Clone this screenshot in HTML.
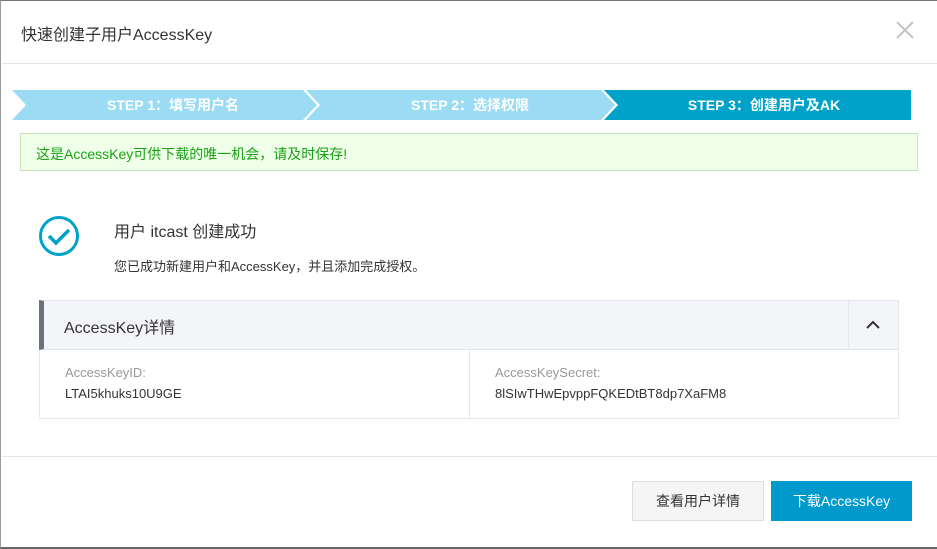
<!DOCTYPE html>
<html><head><meta charset="utf-8"><style>
*{margin:0;padding:0;box-sizing:border-box}
body{width:937px;height:549px;background:#fff;position:relative;overflow:hidden;font-family:"Liberation Sans","Noto Sans CJK SC",sans-serif;color:#333}
.a{position:absolute}
</style></head><body>
<div class="a" style="left:0;top:0;width:937px;height:549px;border-top:1px solid #777;border-left:1px solid #999;border-bottom:2px solid #666"></div>
<div class="a" style="left:21px;top:21px;font-size:16px;color:#333">快速创建子用户AccessKey</div>
<svg class="a" style="left:895px;top:20px" width="20" height="20"><path d="M2 2L18 18M18 2L2 18" stroke="#c4c4c4" stroke-width="2"/></svg>
<div class="a" style="left:2px;top:63px;width:935px;height:1px;background:#e3e3e3"></div>
<svg class="a" style="left:0;top:90px" width="937" height="30">
<polygon points="12,0 303,0 317,15 303,30 12,30 26,15" fill="#9bdcf4"/>
<polygon points="306,0 601,0 615,15 601,30 306,30 320,15" fill="#9bdcf4"/>
<polygon points="604,0 911,0 911,30 604,30 618,15" fill="#00a2ca"/>
<g font-family="Liberation Sans,Noto Sans CJK SC,sans-serif" font-size="14" font-weight="bold" fill="#fff" text-anchor="middle">
<text x="173" y="20">STEP 1：填写用户名</text>
<text x="470" y="20">STEP 2：选择权限</text>
<text x="764" y="20">STEP 3：创建用户及AK</text></g>
</svg>
<div class="a" style="left:20px;top:133px;width:898px;height:38px;background:#efffe9;border:1px solid #c6e4b5;color:#1aa315;font-size:14px;padding:10px 0 0 15px">这是AccessKey可供下载的唯一机会，请及时保存!</div>
<svg class="a" style="left:38px;top:215px" width="42" height="42"><circle cx="21" cy="21" r="18.5" fill="none" stroke="#00a2ca" stroke-width="3"/><path d="M11 21L18 28L31 15" fill="none" stroke="#00a2ca" stroke-width="3.5"/></svg>
<div class="a" style="left:114px;top:218px;font-size:16px;color:#333">用户 itcast 创建成功</div>
<div class="a" style="left:114px;top:256px;font-size:13px;color:#333">您已成功新建用户和AccessKey，并且添加完成授权。</div>
<div class="a" style="left:39px;top:300px;width:860px;height:119px;border:1px solid #e5e8ec"></div>
<div class="a" style="left:39px;top:300px;width:860px;height:50px;background:#f4f5f9;border:1px solid #e3e6eb;border-left:5px solid #6c737c"></div>
<div class="a" style="left:64px;top:314px;font-size:16px;color:#333">AccessKey详情</div>
<div class="a" style="left:848px;top:301px;width:1px;height:48px;background:#e3e6eb"></div>
<svg class="a" style="left:864px;top:318px" width="18" height="14"><path d="M3 10L9 4L15 10" fill="none" stroke="#333" stroke-width="2"/></svg>
<div class="a" style="left:469px;top:350px;width:1px;height:68px;background:#e5e8ec"></div>
<div class="a" style="left:65px;top:365px;font-size:13px;color:#999">AccessKeyID:</div>
<div class="a" style="left:65px;top:386px;font-size:13px;color:#333">LTAI5khuks10U9GE</div>
<div class="a" style="left:495px;top:365px;font-size:13px;color:#999">AccessKeySecret:</div>
<div class="a" style="left:495px;top:386px;font-size:13px;color:#333">8lSIwTHwEpvppFQKEDtBT8dp7XaFM8</div>
<div class="a" style="left:2px;top:456px;width:935px;height:1px;background:#e5e5e5"></div>
<div class="a" style="left:632px;top:481px;width:132px;height:40px;background:#f5f5f5;border:1px solid #ddd;font-size:14px;color:#333;text-align:center;line-height:38px">查看用户详情</div>
<div class="a" style="left:771px;top:481px;width:141px;height:40px;background:#0099cc;font-size:14px;color:#fff;text-align:center;line-height:40px">下载AccessKey</div>
</body></html>
